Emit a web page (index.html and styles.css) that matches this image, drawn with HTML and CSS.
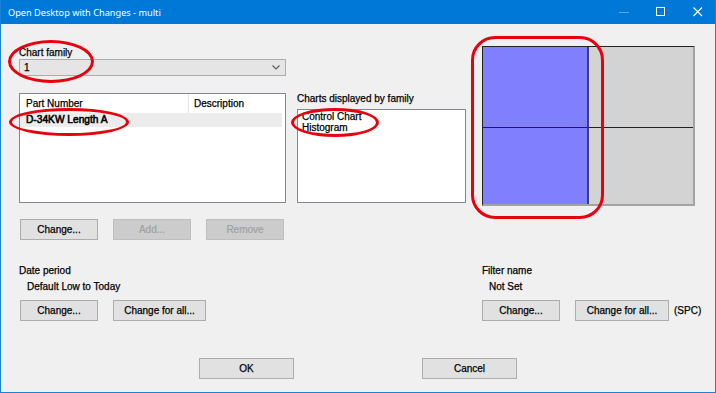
FILE: index.html
```html
<!DOCTYPE html>
<html>
<head>
<meta charset="utf-8">
<link rel="stylesheet" href="styles.css">
</head>
<body>
<div class="window">
  <div class="titlebar">
    <span class="title">Open Desktop with Changes - multi</span>
    <div class="controls">
      <span class="ctl"><svg width="10" height="10" viewBox="0 0 10 10"><line x1="0" y1="5.5" x2="10" y2="5.5" stroke="#5ea6e6" stroke-width="1"/></svg></span>
      <span class="ctl"><svg width="10" height="10" viewBox="0 0 10 10"><rect x="0.5" y="0.5" width="8" height="8" fill="none" stroke="#ffffff" stroke-width="1"/></svg></span>
      <span class="ctl"><svg width="10" height="10" viewBox="0 0 10 10"><path d="M0.5 0.5 L9 9 M9 0.5 L0.5 9" stroke="#ffffff" stroke-width="1.1" fill="none"/></svg></span>
    </div>
  </div>
  <div class="client">
    <div class="top">
      <div class="col-left">
        <div class="label">Chart family</div>
        <div class="combo">
          <span class="combo-text">1</span>
          <svg class="combo-arrow" width="8" height="5" viewBox="0 0 8 5"><path d="M0.5 0.5 L4 4 L7.5 0.5" fill="none" stroke="#606060" stroke-width="1.2"/></svg>
        </div>
        <div class="listview">
          <div class="lv-header">
            <div class="lv-col c1">Part Number</div>
            <div class="lv-col c2">Description</div>
          </div>
          <div class="lv-row">D-34KW Length A</div>
        </div>
        <div class="btn-row">
          <button class="btn">Change...</button>
          <button class="btn disabled">Add...</button>
          <button class="btn disabled">Remove</button>
        </div>
      </div>
      <div class="col-mid">
        <div class="label">Charts displayed by family</div>
        <div class="listbox">
          <div class="lb-item">Control Chart</div>
          <div class="lb-item">Histogram</div>
        </div>
      </div>
      <div class="preview">
        <div class="cell blue top-row"></div>
        <div class="cell gray top-row"></div>
        <div class="cell blue"></div>
        <div class="cell gray"></div>
      </div>
    </div>
    <div class="lower">
      <div class="group date-group">
        <div class="label">Date period</div>
        <div class="value">Default Low to Today</div>
        <div class="btn-row tight">
          <button class="btn">Change...</button>
          <button class="btn wide">Change for all...</button>
        </div>
      </div>
      <div class="group filter-group">
        <div class="label">Filter name</div>
        <div class="value value-filter">Not Set</div>
        <div class="btn-row tight flush">
          <button class="btn">Change...</button>
          <button class="btn wide2">Change for all...</button>
          <span class="spc">(SPC)</span>
        </div>
      </div>
    </div>
    <div class="footer">
      <button class="btn big">OK</button>
      <button class="btn big">Cancel</button>
    </div>
  </div>
  <div class="mark mark-family"></div>
  <div class="mark mark-part"></div>
  <div class="mark mark-charts"></div>
  <div class="mark mark-preview"></div>
</div>
</body>
</html>
```
FILE: styles.css
```css
html, body {
  margin: 0;
  padding: 0;
  background: #f0f0f0;
}

.window {
  position: relative;
  width: 716px;
  height: 393px;
  box-sizing: border-box;
  border: 1px solid #1a83d8;
  border-top: none;
  background: #f0f0f0;
  font-family: "Liberation Sans", Arial, sans-serif;
  font-size: 10px;
  color: #000;
  overflow: hidden;
  -webkit-text-stroke: 0.25px #000;
}

.titlebar {
  height: 24px;
  margin: 0 -1px;
  background: #0078d7;
  display: flex;
  align-items: center;
  padding-left: 8px;
  color: #fff;
  -webkit-text-stroke: 0;
}

.title {
  font-family: "Noto Sans", "Open Sans", sans-serif;
  font-size: 9.2px;
  line-height: 24px;
  flex: 1;
  padding-top: 1px;
}

.controls {
  display: flex;
  height: 24px;
}

.ctl {
  width: 37px;
  height: 24px;
  display: flex;
  align-items: center;
  justify-content: center;
}

.client {
  padding-left: 18px;
}

.top {
  display: flex;
  align-items: flex-start;
}

.label {
  line-height: 13px;
  height: 13px;
  white-space: nowrap;
}

.col-left {
  width: 267px;
  margin-top: 22px;
}

.combo {
  height: 17px;
  box-sizing: border-box;
  border: 1px solid #adadad;
  background: #e5e5e5;
  display: flex;
  align-items: center;
  justify-content: space-between;
  padding: 0 4px 0 4px;
}

.combo-text {
  line-height: 15px;
}

.combo-arrow {
  display: block;
  margin-right: 1px;
}

.listview {
  margin-top: 17px;
  height: 110px;
  box-sizing: border-box;
  border: 1px solid #828790;
  background: #fff;
}

.lv-header {
  display: flex;
  height: 19px;
}

.lv-col {
  line-height: 19px;
  box-sizing: border-box;
}

.lv-col.c1 {
  width: 169px;
  padding-left: 6px;
  border-right: 1px solid #e5e5e5;
}

.lv-col.c2 {
  padding-left: 5px;
}

.lv-row {
  width: 262px;
  height: 14px;
  line-height: 14px;
  background: #ececec;
  padding-left: 6px;
  box-sizing: border-box;
  font-size: 10.2px;
  -webkit-text-stroke: 0.55px #000;
}

.btn-row {
  display: flex;
  gap: 15px;
  margin-top: 16px;
  margin-left: 1px;
  align-items: center;
}

.btn-row.tight {
  margin-top: 7px;
}

.btn-row.flush {
  margin-left: 0;
}

.btn {
  width: 78px;
  height: 21px;
  box-sizing: border-box;
  border: 1px solid #adadad;
  background: #e1e1e1;
  font-family: "Liberation Sans", Arial, sans-serif;
  font-size: 10px;
  color: #000;
  padding: 0;
  margin: 0;
  line-height: 19px;
  text-align: center;
  border-radius: 0;
  -webkit-text-stroke: 0.25px #000;
}

.btn.disabled {
  background: #cccccc;
  border-color: #bfbfbf;
  color: #a0a0a0;
  -webkit-text-stroke: 0.2px #a0a0a0;
}

.btn.wide {
  width: 93px;
}

.btn.wide2 {
  width: 94px;
}

.btn.big {
  width: 95px;
}

.col-mid {
  width: 169px;
  margin-left: 11px;
  margin-top: 68px;
}

.listbox {
  margin-top: 4px;
  height: 94px;
  box-sizing: border-box;
  border: 1px solid #828790;
  background: #fff;
  padding: 1px 4px;
}

.lb-item {
  line-height: 11px;
  height: 11px;
  white-space: nowrap;
}

.preview {
  margin-left: 16px;
  margin-top: 22px;
  width: 213px;
  height: 160px;
  box-sizing: border-box;
  border-top: 1px solid #222;
  border-left: 1px solid #222;
  border-right: 2px solid #a3a3a3;
  border-bottom: 2px solid #a3a3a3;
  display: grid;
  grid-template-columns: 106px 104px;
  grid-template-rows: 81px 76px;
}

.cell {
  box-sizing: border-box;
}

.cell.blue {
  background: #8080ff;
  border-right: 2px solid #3c3c78;
}

.cell.gray {
  background: #d3d3d3;
}

.cell.top-row {
  border-bottom: 1px solid #222;
}

.lower {
  display: flex;
  margin-top: 24px;
}

.group.date-group {
  width: 463px;
}

.value {
  margin-top: 3px;
  padding-left: 8px;
  line-height: 13px;
  height: 13px;
}

.value.value-filter {
  padding-left: 7px;
}

.spc {
  margin-left: -10px;
  line-height: 21px;
}

.footer {
  display: flex;
  gap: 128px;
  margin-top: 37px;
  margin-left: 180px;
}

.mark {
  position: absolute;
  box-sizing: border-box;
  border: 3px solid #e8000c;
  pointer-events: none;
}

.mark-family {
  left: 7px;
  top: 40px;
  width: 86px;
  height: 43px;
  border-radius: 50%;
}

.mark-part {
  left: 8px;
  top: 108px;
  width: 120px;
  height: 28px;
  border-radius: 50%;
}

.mark-charts {
  left: 290px;
  top: 108px;
  width: 88px;
  height: 29px;
  border-radius: 50%;
}

.mark-preview {
  left: 470px;
  top: 36px;
  width: 133px;
  height: 183px;
  border-radius: 24px;
}
```
